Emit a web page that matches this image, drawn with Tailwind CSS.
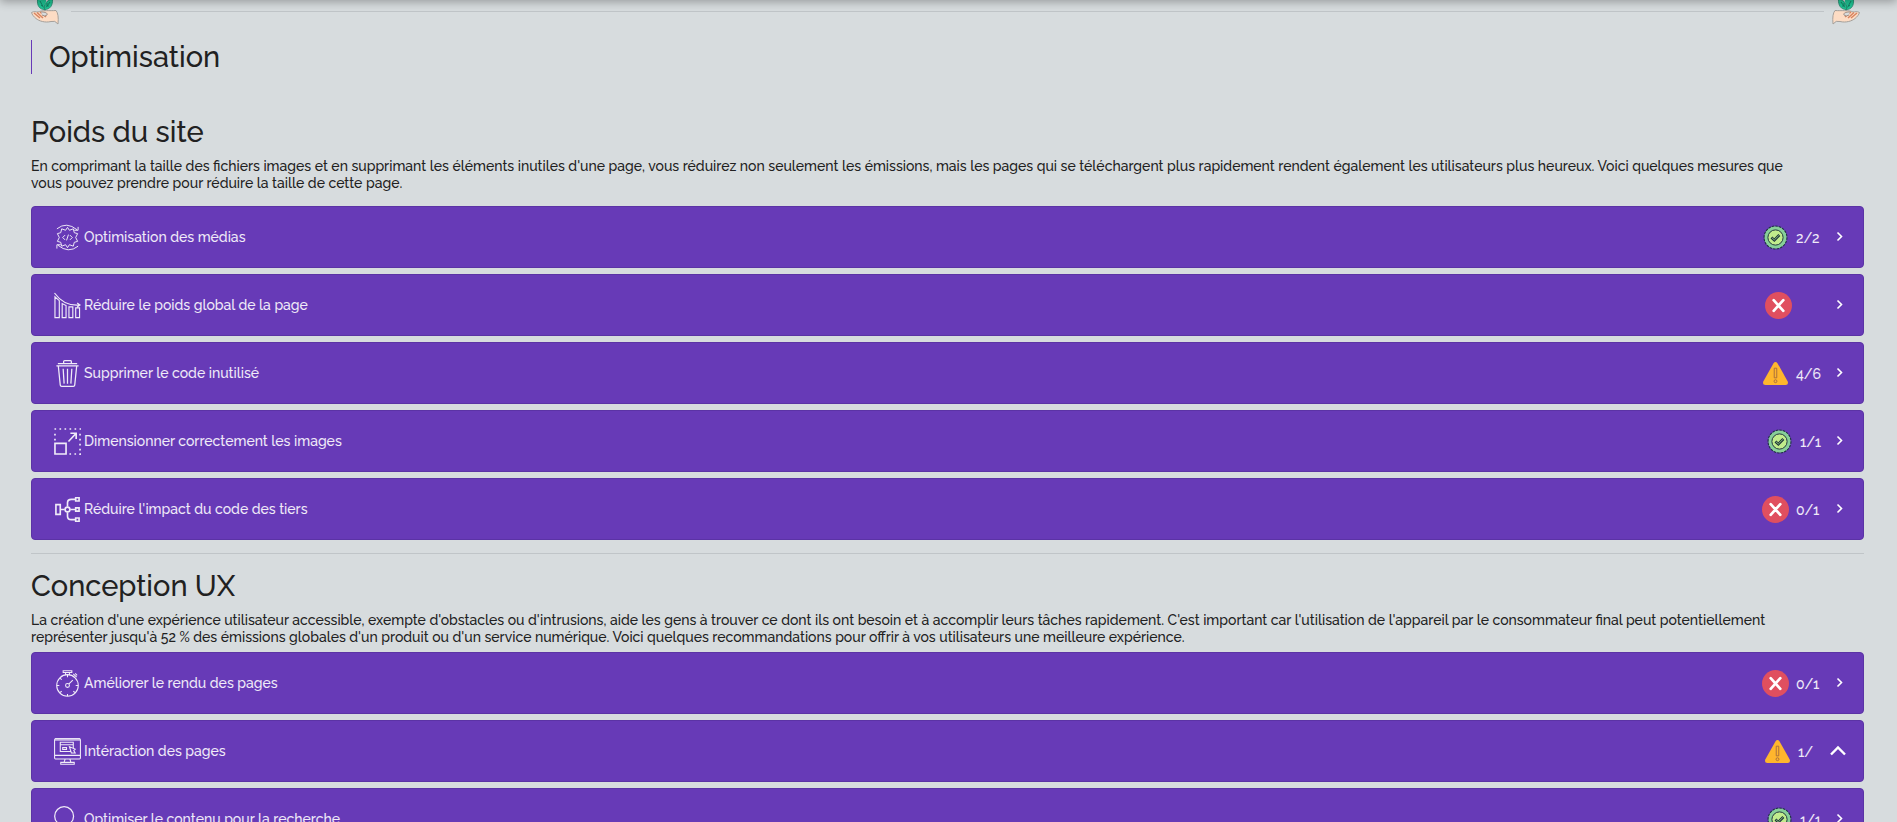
<!DOCTYPE html>
<html lang="fr">
<head>
<meta charset="utf-8">
<meta name="viewport" content="width=device-width, initial-scale=1">
<title>Optimisation</title>
<script src="https://cdn.jsdelivr.net/npm/@tailwindcss/browser@4"></script>
</head>
<body class="bg-[#d7dcde] font-[Raleway,Lato,sans-serif] font-medium text-[#212121]">
<svg class="hidden" aria-hidden="true">
  <symbol id="plant" viewBox="0 0 28 28">
    <path d="M14 12V16" stroke="#23856b" stroke-width="1.200"/>
    <path d="M6.500 3C11 2 14.500 5 13.500 12.500C8.500 12.500 6 8.500 6.500 3Z" fill="#1fc695" stroke="#23856b" stroke-width=".8"/>
    <path d="M21.500 2C22 8.500 19 12.500 13.500 12.500C13 6.500 16 3 21.500 2Z" fill="#1fc695" stroke="#23856b" stroke-width=".8"/>
    <path d="M6.500 3V0H15V5L13.500 8Z" fill="#1fc695"/>
    <path d="M9 4L12.500 10.500M10 8.500L12 9M19 5L15 10.500M16 6V9H18" fill="none" stroke="#137a60" stroke-width=".9"/>
    <path d="M.5 15.500C3 14 5 15 7 15C11 13 19 14 25 13.500Q28 17 27 27Q24 23 20 24.500C14 26 8 24 5 21.500C3 20 1 17.500 .5 15.500Z" fill="#fddcc4" stroke="#a5a09b" stroke-width="1"/>
    <path d="M3 16L9 21M6 15.500L12 21M9 15L15 20" fill="none" stroke="#d9845f" stroke-width="1.500"/>
    <path d="M10 15C14 15 17 16 16 18Q14 20 11 18" fill="#d7dcde" stroke="#a28f84" stroke-width="1"/>
  </symbol>
  <symbol id="gear" viewBox="0 0 28 28">
    <g fill="none" stroke="currentColor" stroke-width="1">
      <path d="M3 5Q13-3 24 6M21 6.500H25V3M25 23Q15 31 4 22M7 21.500H3V25.500"/>
      <path d="M12 6.500L14 3.500L16 6.500L20 5L21 9L24.500 10L22.500 14L24.500 18L21 19L20 23L16 21.500L14 24.500L12 21.500L8 23L7 19L3.500 18L5.500 14L3.500 10L7 9L8 5Z"/>
      <path d="M11.500 11.500L9 14L11.500 16.500M16.500 11.500L19 14L16.500 16.500M15 11L13 17"/>
    </g>
  </symbol>
  <symbol id="bars" viewBox="0 0 28 28">
    <g fill="none" stroke="currentColor" stroke-width="1.200">
      <path d="M1 26.500V5L5.500 9V26.500ZM8.500 26.500V12L12.500 14V26.500ZM15.500 26.500V15.500H19.500V26.500ZM22.500 26.500V16.500H26.500V26.500ZM.5 1C7 10 15 14.500 26.500 13.500M24 11.500L27 13.500L24 15.500"/>
    </g>
  </symbol>
  <symbol id="trash" viewBox="0 0 28 28">
    <g fill="none" stroke="currentColor" stroke-width="1.300">
      <path d="M10 4V1.500Q10 .7 11 .7H17Q18 .7 18 1.500V4M4 3.700H24M2.500 6.200H25.500M4.500 6.500L6.500 26Q6.700 27.300 8 27.300H20Q21.300 27.300 21.500 26L23.500 6.500M9.500 9L10.500 24.500M14 9V24.500M18.500 9L17.500 24.500"/>
    </g>
  </symbol>
  <symbol id="resize" viewBox="0 0 28 28">
    <g fill="none" stroke="currentColor">
      <path stroke-width="1.700" d="M1 16H12.500V27H1ZM15 14L22.500 6M17 5.500H23V11.500"/>
      <path stroke-width="1.700" stroke-dasharray="1.700 3.500" d="M.5 1H28M1 6V13M27 6V28M16 27H28"/>
    </g>
  </symbol>
  <symbol id="tree" viewBox="0 0 28 28">
    <g fill="none" stroke="currentColor" stroke-width="1.700">
      <path d="M2 9H6.500V19H2ZM6.500 14H11M17 14H22M14 11V7Q14 3.500 18 3.500H22M14 17V21Q14 24.500 18 24.500H22"/>
      <circle cx="14" cy="14" r="2.500"/>
      <path d="M22.500 1.800H26V5.200H22.500ZM22.500 12.300H26V15.700H22.500ZM22.500 22.800H26V26.200H22.500Z"/>
    </g>
  </symbol>
  <symbol id="timer" viewBox="0 0 28 28">
    <g fill="none" stroke="currentColor" stroke-width="1.100">
      <circle cx="14" cy="16" r="11.200"/>
      <circle cx="14" cy="16" r="2"/>
      <path d="M15.500 14.500L19.500 10.500M9.500 .7H18.500V2.500H9.500ZM12 2.500V5M16 2.500V5M20 4L23.500 7.500M22 3.500L24 5.500M14 5V7.500M14 25V27M3 16H5.500M22.500 16H25M6 8.500L8 10M6 23.500L8 22M22 23.500L20 22"/>
    </g>
  </symbol>
  <symbol id="screen" viewBox="0 0 28 28">
    <g fill="none" stroke="currentColor" stroke-width="1.100">
      <path d="M1 1.500H27" stroke-width="3" stroke-opacity=".6"/>
      <path d="M1.500 .7H26.500Q27.400 .7 27.400 2V20.500Q27.400 21.700 26.500 21.700H1.500Q.6 21.700 .6 20.500V2Q.6 .7 1.500 .7ZM.6 18H27.400M6.500 4.500H20V14H6.500ZM6.500 7H20M9 10H13V12H9ZM11.500 22L10.500 25M16.500 22L17.500 25M7 25.300H21V27.200H7Z"/>
      <path d="M16 9L22 11.500L20.500 13L22 15.500H18Z" fill="#673ab7"/>
    </g>
  </symbol>
  <symbol id="search" viewBox="0 0 28 28">
    <g fill="none" stroke="currentColor" stroke-width="1.300">
      <circle cx="10.500" cy="10.500" r="9.800"/><path d="M17.500 17.500L27 27"/>
    </g>
  </symbol>
  <symbol id="ok" viewBox="0 0 28 28">
    <circle cx="14" cy="14" r="11.600" fill="#87cf98"/>
    <circle cx="14" cy="14" r="11.900" fill="none" stroke="#1f3442" stroke-width="1.100" stroke-dasharray="2.600 1.100"/>
    <circle cx="14" cy="14" r="7.900" fill="#c1ec8c" stroke="#20333c" stroke-width="1"/>
    <path d="M9.800 14L12.800 16.800L18 11.400" fill="none" stroke="#20333c" stroke-width="2.800"/>
    <path d="M10.400 14.400L12.800 16.500L17.500 11.800" fill="none" stroke="#87c77a" stroke-width="1"/>
  </symbol>
  <symbol id="ko" viewBox="0 0 28 28">
    <circle cx="14" cy="14" r="14" fill="#e04f5f"/>
    <path d="M9 8.500L19 19.500M19 8.500L9 19.500" stroke="#fff" stroke-width="2.800" stroke-linecap="round"/>
  </symbol>
  <symbol id="warn" viewBox="0 0 28 28">
    <path d="M11.800 3.500Q14 .4 16.200 3.500L26.500 22Q28 25.500 24.500 26H3.500Q0 25.500 1.500 22Z" fill="#ffb62d"/>
    <path d="M12.700 8.500H15.300V18.500H12.700Z" fill="none" stroke="#a0683f" stroke-width=".9"/>
    <circle cx="14" cy="22" r="1.500" fill="none" stroke="#a0683f" stroke-width=".9"/>
  </symbol>
  <symbol id="next" viewBox="0 0 16 16">
    <path d="M5.500 3.500L9.500 7.500L5.500 11.500" fill="none" stroke="currentColor" stroke-width="1.600"/>
  </symbol>
  <symbol id="up" viewBox="0 0 16 16">
    <path d="M1 11.500L8 4.500L15 11.500" fill="none" stroke="currentColor" stroke-width="2.400"/>
  </symbol>
</svg>

<header class="fixed inset-x-0 -top-4 z-10 h-4 bg-white shadow-[0_2px_10px_rgba(0,0,0,0.3)]"></header>

<main class="-mt-[3px] pr-[33px] pl-[31px]">
  <div class="flex items-center gap-3">
    <svg class="size-7 shrink-0"><use href="#plant"/></svg>
    <hr class="flex-1 border-[#c0c5c8]">
    <svg class="-ml-1 mr-1 size-7 shrink-0 -scale-x-100"><use href="#plant"/></svg>
  </div>

  <h1 class="mt-[15px] border-l border-[#673ab7] pl-[17px] text-[29px] leading-[34px]">Optimisation</h1>

  <section class="mt-10">
    <h2 class="text-[29px] leading-9">Poids du site</h2>
    <p class="mt-2 pr-16 text-[14px] leading-[17px]">En comprimant la taille des fichiers images et en supprimant les éléments inutiles d'une page, vous réduirez non seulement les émissions, mais les pages qui se téléchargent plus rapidement rendent également les utilisateurs plus heureux. Voici quelques mesures que vous pouvez prendre pour réduire la taille de cette page.</p>
    <div class="mt-3.5 flex flex-col gap-1.5 text-[14px] text-white/90">
      <button type="button" class="flex h-[62px] items-center rounded-sm border border-[#5b33a5] bg-[#673ab7] pr-[15px] pl-[22px] text-left">
        <svg class="mr-[3px] size-[27px] shrink-0"><use href="#gear"/></svg><span class="flex-1">Optimisation des médias</span>
        <svg class="mr-[7px] size-[27px]"><use href="#ok"/></svg><span class="mr-3 w-6 pt-0.5">2/2</span><svg class="size-4 text-white"><use href="#next"/></svg>
      </button>
      <button type="button" class="flex h-[62px] items-center rounded-sm border border-[#5b33a5] bg-[#673ab7] pr-[15px] pl-[22px] text-left">
        <svg class="mr-[3px] size-[27px] shrink-0"><use href="#bars"/></svg><span class="flex-1">Réduire le poids global de la page</span>
        <svg class="mr-10 size-[27px]"><use href="#ko"/></svg><svg class="size-4 text-white"><use href="#next"/></svg>
      </button>
      <button type="button" class="flex h-[62px] items-center rounded-sm border border-[#5b33a5] bg-[#673ab7] pr-[15px] pl-[22px] text-left">
        <svg class="mr-[3px] size-[27px] shrink-0"><use href="#trash"/></svg><span class="flex-1">Supprimer le code inutilisé</span>
        <svg class="mr-[7px] size-[27px]"><use href="#warn"/></svg><span class="mr-3 w-6 pt-0.5">4/6</span><svg class="size-4 text-white"><use href="#next"/></svg>
      </button>
      <button type="button" class="flex h-[62px] items-center rounded-sm border border-[#5b33a5] bg-[#673ab7] pr-[15px] pl-[22px] text-left">
        <svg class="mr-[3px] size-[27px] shrink-0"><use href="#resize"/></svg><span class="flex-1">Dimensionner correctement les images</span>
        <svg class="mr-[7px] size-[27px]"><use href="#ok"/></svg><span class="mr-3 w-5 pt-0.5">1/1</span><svg class="size-4 text-white"><use href="#next"/></svg>
      </button>
      <button type="button" class="flex h-[62px] items-center rounded-sm border border-[#5b33a5] bg-[#673ab7] pr-[15px] pl-[22px] text-left">
        <svg class="mr-[3px] size-[27px] shrink-0"><use href="#tree"/></svg><span class="flex-1">Réduire l'impact du code des tiers</span>
        <svg class="mr-[7px] size-[27px]"><use href="#ko"/></svg><span class="mr-3 w-6 pt-0.5">0/1</span><svg class="size-4 text-white"><use href="#next"/></svg>
      </button>
    </div>
  </section>

  <hr class="mt-[13px] border-[#c0c5c8]">

  <section class="mt-3.5">
    <h2 class="text-[29px] leading-9">Conception UX</h2>
    <p class="mt-2 pr-16 text-[14px] leading-[17px]">La création d'une expérience utilisateur accessible, exempte d'obstacles ou d'intrusions, aide les gens à trouver ce dont ils ont besoin et à accomplir leurs tâches rapidement. C'est important car l'utilisation de l'appareil par le consommateur final peut potentiellement représenter jusqu'à 52 % des émissions globales d'un produit ou d'un service numérique. Voici quelques recommandations pour offrir à vos utilisateurs une meilleure expérience.</p>
    <div class="mt-1.5 flex flex-col gap-1.5 text-[14px] text-white/90">
      <button type="button" class="flex h-[62px] items-center rounded-sm border border-[#5b33a5] bg-[#673ab7] pr-[15px] pl-[22px] text-left">
        <svg class="mr-[3px] size-[27px] shrink-0"><use href="#timer"/></svg><span class="flex-1">Améliorer le rendu des pages</span>
        <svg class="mr-[7px] size-[27px]"><use href="#ko"/></svg><span class="mr-3 w-6 pt-0.5">0/1</span><svg class="size-4 text-white"><use href="#next"/></svg>
      </button>
      <button type="button" aria-expanded="true" class="flex h-[62px] items-center rounded-sm border border-[#5b33a5] bg-[#673ab7] pr-[15px] pl-[22px] text-left">
        <svg class="mr-[3px] size-[27px] shrink-0"><use href="#screen"/></svg><span class="flex-1">Intéraction des pages</span>
        <svg class="mr-[7px] size-[27px]"><use href="#warn"/></svg><span class="mr-3 w-5 pt-0.5">1/</span><svg class="mr-0.5 size-4 text-white"><use href="#up"/></svg>
      </button>
      <button type="button" class="flex h-[62px] items-center rounded-sm border border-[#5b33a5] bg-[#673ab7] pr-[15px] pl-[22px] text-left">
        <svg class="mr-[3px] size-[27px] shrink-0"><use href="#search"/></svg><span class="flex-1">Optimiser le contenu pour la recherche</span>
        <svg class="mr-[7px] size-[27px]"><use href="#ok"/></svg><span class="mr-3 w-5 pt-0.5">1/1</span><svg class="size-4 text-white"><use href="#next"/></svg>
      </button>
    </div>
  </section>
</main>
</body>
</html>
